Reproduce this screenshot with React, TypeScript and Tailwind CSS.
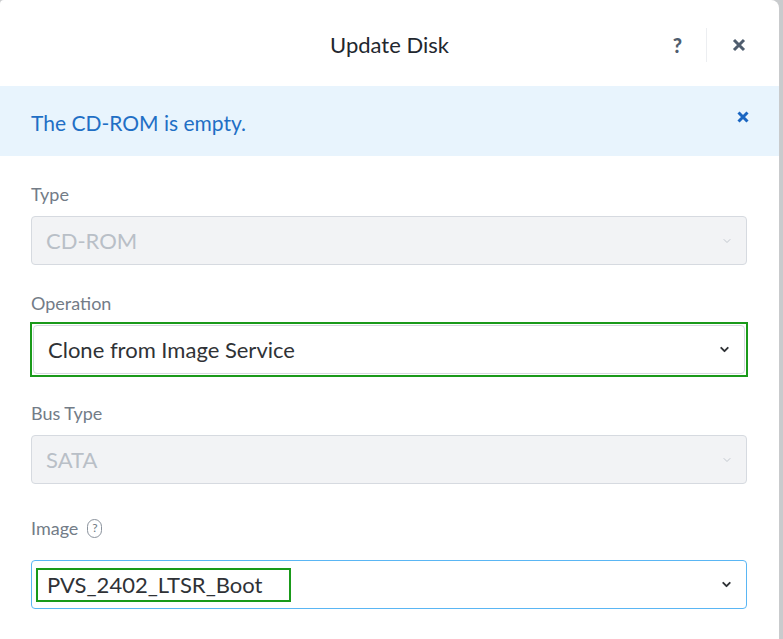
import { ChevronDown } from 'lucide-react';

const FONT = { fontFamily: 'Lato, "Open Sans", sans-serif' };

function Select({
  value,
  disabled,
  focused,
  highlightValue,
}: {
  value: string;
  disabled?: boolean;
  focused?: boolean;
  highlightValue?: boolean;
}) {
  const base = disabled
    ? 'bg-[#f2f3f5] border-[#d6dae0] text-[#b9bfc7]'
    : focused
      ? 'bg-white border-[#5ab6f4] text-[#2f3236]'
      : 'bg-white border-[#d6dae0] text-[#2f3236]';
  return (
    <div className={`h-[49px] w-full rounded-[4px] border flex items-center justify-between pr-[13px] ${base}`}>
      {highlightValue ? (
        <div className="ml-[4px] w-[255px] h-[34px] pl-[9px] border-2 border-[#1a9a1a] flex items-center text-[22px]">
          {value}
        </div>
      ) : (
        <span className="pl-[14px] text-[22px]">{value}</span>
      )}
      <ChevronDown
        className={disabled ? 'w-[12px] h-[12px] text-[#c3c8cf]' : 'w-[13px] h-[13px] text-[#2f3236]'}
        strokeWidth={disabled ? 2 : 3.5}
      />
    </div>
  );
}

function Label({ children }: { children: React.ReactNode }) {
  return <div className="text-[18px] text-[#737c87] leading-none">{children}</div>;
}

export default function App() {
  return (
    <div className="min-h-screen bg-[#c9cbcd]" style={FONT}>
      <div className="w-[779px] h-[639px] bg-white rounded-tr-[8px] rounded-tl-[4px]">
        {/* Header */}
        <div className="h-[86px] relative flex items-center justify-center">
          <h2 className="text-[22px] text-[#22272e] mt-[2px]">Update Disk</h2>
          <div className="absolute right-[33px] top-[28px] flex items-center h-[34px]">
            <span className="text-[20px] font-black text-[#4f5d6e] pr-[24px]">?</span>
            <div className="w-px h-[34px] bg-[#eceef1]" />
            <svg className="ml-[25px] w-[14px] h-[14px]" viewBox="0 0 14 14" fill="none" stroke="#4f5d6e" strokeWidth={3}>
              <path d="M2 2l10 10M12 2L2 12" />
            </svg>
          </div>
        </div>

        {/* Alert */}
        <div className="h-[70px] bg-[#e8f4fd] flex items-center justify-between pl-[31px] pr-[30px]">
          <span className="text-[21px] text-[#1f6fc5] mt-[3px]">The CD-ROM is empty.</span>
          <svg className="w-[12px] h-[12px] mt-[-8px]" viewBox="0 0 12 12" fill="none" stroke="#1a66c2" strokeWidth={3}>
            <path d="M1.5 1.5l9 9M10.5 1.5l-9 9" />
          </svg>
        </div>

        {/* Form */}
        <div className="px-[31px] pr-[32px]">
          <div className="pt-[29px]">
            <Label>Type</Label>
            <div className="mt-[13px]">
              <Select value="CD-ROM" disabled />
            </div>
          </div>

          <div className="pt-[29px]">
            <Label>Operation</Label>
            <div className="mt-[10px] -mx-[1px] border-2 border-[#1a9a1a] p-px">
              <Select value="Clone from Image Service" />
            </div>
          </div>

          <div className="pt-[27px]">
            <Label>Bus Type</Label>
            <div className="mt-[13px]">
              <Select value="SATA" disabled />
            </div>
          </div>

          <div className="pt-[35px]">
            <div className="flex items-center gap-[9px] h-[18px]">
              <Label>Image</Label>
              <span className="w-[15px] h-[19px] rounded-full border border-[#8a929c] text-[12px] text-[#6f7782] flex items-center justify-center leading-none">
                ?
              </span>
            </div>
            <div className="mt-[23px]">
              <Select value="PVS_2402_LTSR_Boot" focused highlightValue />
            </div>
          </div>
        </div>
      </div>
    </div>
  );
}
